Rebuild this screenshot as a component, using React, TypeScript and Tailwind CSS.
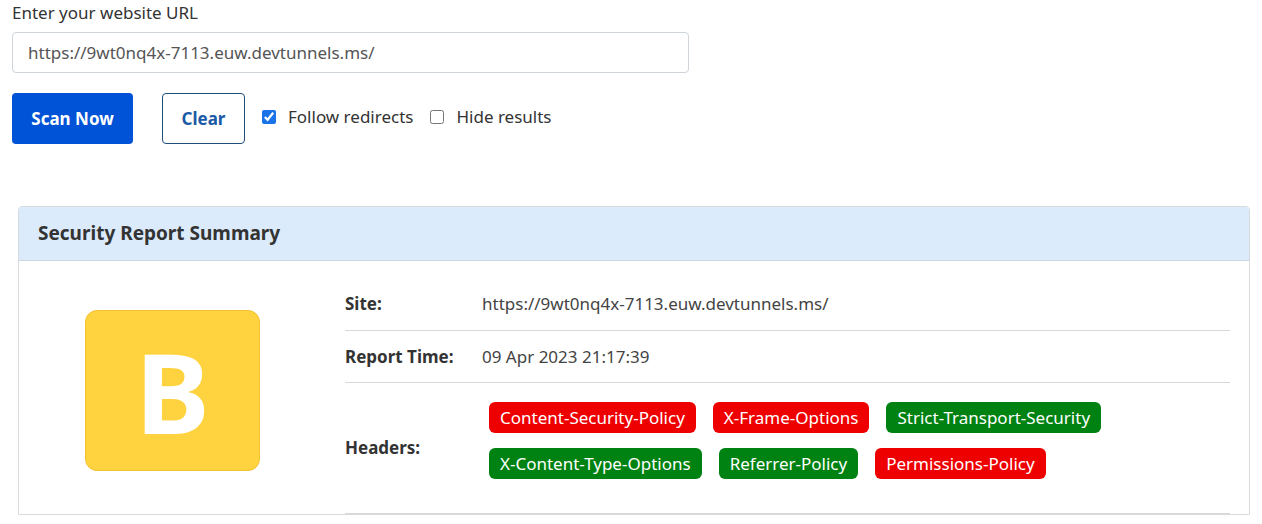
import React, { useState } from 'react'

const headers: { name: string; ok: boolean }[] = [
  { name: 'Content-Security-Policy', ok: false },
  { name: 'X-Frame-Options', ok: false },
  { name: 'Strict-Transport-Security', ok: true },
  { name: 'X-Content-Type-Options', ok: true },
  { name: 'Referrer-Policy', ok: true },
  { name: 'Permissions-Policy', ok: false },
]

export default function App(): React.JSX.Element {
  const [url, setUrl] = useState('https://9wt0nq4x-7113.euw.devtunnels.ms/')
  const [follow, setFollow] = useState(true)
  const [hide, setHide] = useState(false)

  return (
    <div className="min-h-[524px] bg-white text-[#212529] font-['Noto_Sans','Open_Sans',sans-serif]">
      <div className="px-3 pt-[1px]">
        <label className="block text-[17px] leading-[24px] text-[#333]">Enter your website URL</label>
        <input
          className="mt-[7px] block w-[677px] h-[41px] rounded-[4px] border border-[#ced4da] px-[15px] text-[17px] text-[#555] outline-none"
          value={url}
          onChange={(e) => setUrl(e.target.value)}
        />
        <div className="mt-[20px] flex items-center">
          <button
            type="button"
            className="h-[51px] w-[121px] rounded-[4px] bg-[#0052d6] text-[17px] font-bold text-white"
          >
            Scan Now
          </button>
          <button
            type="button"
            className="ml-[29px] h-[51px] w-[83px] rounded-[4px] border border-[#1f4e79] text-[17px] font-bold text-[#1a5aa6]"
          >
            Clear
          </button>
          <label className="ml-[17px] -mt-[3px] flex items-center gap-[12px] text-[17px] text-[#333]">
            <input
              type="checkbox"
              className="h-[14px] w-[14px] accent-[#1a73e8]"
              checked={follow}
              onChange={(e) => setFollow(e.target.checked)}
            />
            Follow redirects
          </label>
          <label className="ml-[17px] -mt-[3px] flex items-center gap-[12px] text-[17px] text-[#333]">
            <input
              type="checkbox"
              className="h-[14px] w-[14px]"
              checked={hide}
              onChange={(e) => setHide(e.target.checked)}
            />
            Hide results
          </label>
        </div>
      </div>

      <div className="mx-[18px] mt-[62px] rounded-t-[4px] border border-[#d6dbe0] w-[1232px]">
        <div className="h-[54px] flex items-center px-[19px] bg-[#dcebfc] border-b border-[#cdd5dd] text-[19px] font-bold text-[#333]">
          Security Report Summary
        </div>
        <div className="flex">
          <div className="w-[326px] pl-[66px] pt-[49px]">
            <div className="w-[175px] h-[161px] rounded-[12px] bg-[#ffd23f] border border-[#f2c230] flex items-center justify-center text-white font-bold text-[112px] leading-none">
              B
            </div>
          </div>
          <div className="w-[885px]">
            <div className="flex items-center h-[70px] border-b border-[#d8d8d8] pt-[16px]">
              <div className="w-[137px] text-[17px] font-bold text-[#333]">Site:</div>
              <div className="text-[17px] text-[#444]">https://9wt0nq4x-7113.euw.devtunnels.ms/</div>
            </div>
            <div className="flex items-center h-[52px] border-b border-[#d8d8d8]">
              <div className="w-[137px] text-[17px] font-bold text-[#333]">Report Time:</div>
              <div className="text-[17px] text-[#444]">09 Apr 2023 21:17:39</div>
            </div>
            <div className="flex items-center h-[131px] border-b border-[#d8d8d8]">
              <div className="w-[137px] text-[17px] font-bold text-[#333]">Headers:</div>
              <div className="flex flex-wrap w-[660px] gap-x-[17px] gap-y-[15px] pl-[7px] mb-[15px]">
                {headers.map((h) => (
                  <span
                    key={h.name}
                    className={`h-[31px] px-[11px] rounded-[6px] flex items-center text-[17px] text-white ${
                      h.ok ? 'bg-[#008212]' : 'bg-[#ef0000]'
                    }`}
                  >
                    {h.name}
                  </span>
                ))}
              </div>
            </div>
          </div>
        </div>
      </div>
    </div>
  )
}
